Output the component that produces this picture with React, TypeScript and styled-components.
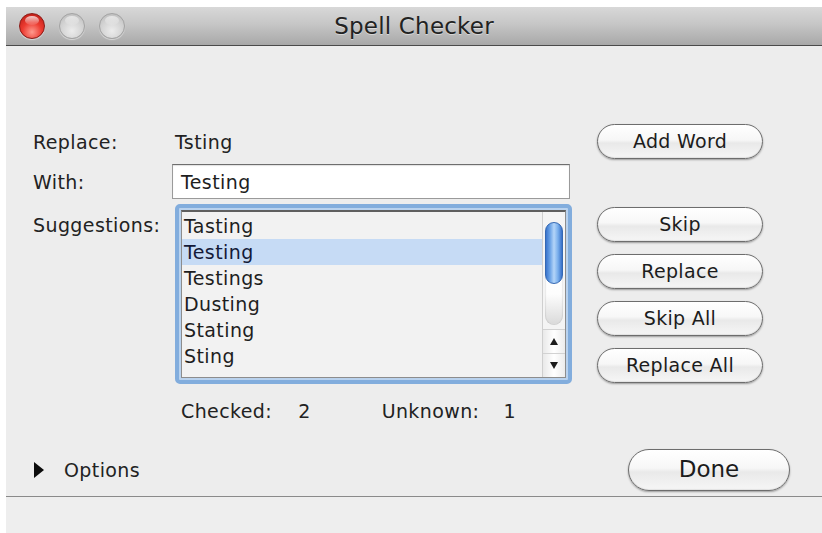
import React from "react";
import styled, { createGlobalStyle } from "styled-components";

const Global = createGlobalStyle`
  html, body { margin: 0; padding: 0; background: #ffffff; }
  body { font-family: "DejaVu Sans", "Liberation Sans", sans-serif; color: #1e1e1e; }
  * { box-sizing: border-box; }
`;

const Window = styled.div`
  margin: 7px 0 0 6px;
  width: 816px;
  height: 526px;
  display: flex;
  flex-direction: column;
  background: #ededed;
`;

const TitleBar = styled.div`
  height: 39px;
  flex: none;
  display: grid;
  grid-template-columns: 1fr auto 1fr;
  align-items: center;
  background: linear-gradient(#d8d8d8 0%, #c6c6c6 45%, #a8a8a8 100%);
  border-bottom: 1px solid #4a4a4a;
`;

const Lights = styled.div`
  display: flex;
  align-items: center;
  gap: 14px;
  padding-left: 13px;
`;

const Light = styled.span<{ $close?: boolean }>`
  position: relative;
  width: 26px;
  height: 26px;
  border-radius: 50%;
  border: 1px solid ${(p) => (p.$close ? "#8c1a16" : "#a3a3a3")};
  background: ${(p) =>
    p.$close
      ? "radial-gradient(circle at 50% 75%, #ff9a8e 0%, #ec3b31 45%, #b3160f 100%)"
      : "radial-gradient(circle at 50% 70%, #ececec 0%, #cfcfcf 60%, #b2b2b2 100%)"};
  box-shadow: 0 1px 1px rgba(255, 255, 255, 0.5);

  &::after {
    content: "";
    position: absolute;
    left: 5px;
    top: 2px;
    width: 14px;
    height: 9px;
    border-radius: 50%;
    background: linear-gradient(rgba(255, 255, 255, 0.9), rgba(255, 255, 255, 0.1));
    opacity: ${(p) => (p.$close ? 0.85 : 0.6)};
  }
`;

const Title = styled.div`
  font-size: 23px;
  color: #222;
  letter-spacing: 0.2px;
  text-shadow: 0 1px 0 rgba(255, 255, 255, 0.45);
`;

const Body = styled.div`
  flex: 1;
  display: flex;
  flex-direction: column;
  padding: 78px 32px 5px 27px;
  border-bottom: 1px solid #8a8a8a;
  font-size: 19px;
  letter-spacing: 0.4px;
`;

const Form = styled.div`
  display: grid;
  grid-template-columns: 114px 400px 166px;
  grid-template-rows: 35px 35px 180px auto;
  column-gap: 25px;
  row-gap: 5px;
  align-items: center;
`;

const Label = styled.div<{ $top?: boolean }>`
  line-height: 24px;
  color: #222;
  white-space: nowrap;
  align-self: ${(p) => (p.$top ? "start" : "center")};
  margin-top: ${(p) => (p.$top ? "9px" : "0")};
`;

const Value = styled.div`
  line-height: 24px;
  padding-left: 3px;
  color: #222;
`;

const Field = styled.div`
  width: 398px;
  height: 35px;
  display: flex;
  align-items: center;
  padding-left: 8px;
  background: #ffffff;
  border: 1px solid #9a9a9a;
  border-top-color: #6e6e6e;
  box-shadow: inset 0 1px 1px rgba(0, 0, 0, 0.12);
`;

const ListFrame = styled.div`
  width: 397px;
  height: 180px;
  margin-left: 3px;
  padding: 2px;
  border: 4px solid #82addd;
  border-radius: 5px;
  background: #b9d2ee;
`;

const ListBox = styled.div`
  height: 100%;
  display: flex;
  background: #f2f2f2;
  border: 1px solid #8d8d8d;
  border-top: 2px solid #5f5f5f;
`;

const Rows = styled.div`
  flex: 1;
  padding-top: 1px;
`;

const Row = styled.div<{ $selected?: boolean }>`
  height: 26px;
  line-height: 26px;
  padding-left: 2px;
  color: ${(p) => (p.$selected ? "#141a38" : "#1e1e1e")};
  background: ${(p) => (p.$selected ? "#c6dbf5" : "transparent")};
`;

const ScrollBar = styled.div`
  width: 23px;
  display: flex;
  flex-direction: column;
  border-left: 1px solid #cfcfcf;
  background: #f4f4f4;
`;

/* the empty part of the track reads as a pale capsule under the thumb */
const Track = styled.div`
  flex: 1;
  padding: 10px 2px 4px 2px;
  display: flex;
  flex-direction: column;
`;

const TrackCapsule = styled.div`
  flex: 1;
  display: flex;
  flex-direction: column;
  border-radius: 10px;
  background: linear-gradient(#ffffff 0%, #fdfdfd 70%, #d9d9d9 100%);
  box-shadow: inset 1px 0 1px rgba(0, 0, 0, 0.08), inset -1px 0 1px rgba(0, 0, 0, 0.08);
`;

const Thumb = styled.div`
  height: 62px;
  border-radius: 10px;
  border: 1px solid #3468b3;
  background: linear-gradient(90deg, #3a74cc 0%, #6aa2e6 25%, #b4d5f8 50%, #78aeec 75%, #3870c8 100%);
`;

const Arrow = styled.div<{ $down?: boolean }>`
  height: 24px;
  display: flex;
  align-items: center;
  justify-content: center;
  border-top: 1px solid #d2d2d2;
  background: linear-gradient(90deg, #e9e9e9, #ffffff 50%, #ececec);

  &::before {
    content: "";
    width: 0;
    height: 0;
    border-left: 4px solid transparent;
    border-right: 4px solid transparent;
    ${(p) => (p.$down ? "border-top: 7px solid #1c1c1c;" : "border-bottom: 7px solid #1c1c1c;")}
  }
`;

const Buttons = styled.div`
  align-self: start;
  display: flex;
  flex-direction: column;
  gap: 12px;
  padding-top: 3px;
`;

const PillButton = styled.button<{ $big?: boolean }>`
  width: ${(p) => (p.$big ? "162px" : "166px")};
  height: ${(p) => (p.$big ? "42px" : "35px")};
  padding: 0 0 2px;
  border: 1px solid #6d6d6d;
  border-radius: 22px;
  font-family: inherit;
  font-size: ${(p) => (p.$big ? "23px" : "19px")};
  letter-spacing: ${(p) => (p.$big ? "0" : "0.3px")};
  color: #1c1c1c;
  background: linear-gradient(#ffffff 0%, #f7f7f7 45%, #e9e9e9 55%, #f6f6f6 100%);
  box-shadow: 0 1px 2px rgba(0, 0, 0, 0.35), inset 0 -1px 1px rgba(0, 0, 0, 0.08);
`;

const Counts = styled.div`
  grid-column: 2;
  display: flex;
  align-items: center;
  margin-top: 10px;
  padding-left: 9px;
  line-height: 24px;
  color: #222;
`;

const CountValue = styled.span<{ $gap: number }>`
  margin-left: ${(p) => p.$gap}px;
`;

const CountLabel = styled.span<{ $gap?: number }>`
  margin-left: ${(p) => p.$gap ?? 0}px;
`;

const Footer = styled.div`
  margin-top: auto;
  display: flex;
  align-items: center;
  justify-content: space-between;
  padding-left: 1px;
`;

const Disclosure = styled.div`
  display: flex;
  align-items: center;
  gap: 20px;
  color: #222;
`;

const Triangle = styled.span`
  width: 0;
  height: 0;
  border-top: 8px solid transparent;
  border-bottom: 8px solid transparent;
  border-left: 10px solid #0c0c0c;
`;

const BottomStrip = styled.div`
  height: 36px;
  flex: none;
  background: #eeeeee;
`;

const suggestions = ["Tasting", "Testing", "Testings", "Dusting", "Stating", "Sting"];

export default function App() {
  return (
    <>
      <Global />
      <Window>
        <TitleBar>
          <Lights>
            <Light $close />
            <Light />
            <Light />
          </Lights>
          <Title>Spell Checker</Title>
          <div />
        </TitleBar>
        <Body>
          <Form>
            <Label>Replace:</Label>
            <Value>Tsting</Value>
            <PillButton>Add Word</PillButton>

            <Label>With:</Label>
            <Field>Testing</Field>
            <div />

            <Label $top>Suggestions:</Label>
            <ListFrame>
              <ListBox>
                <Rows>
                  {suggestions.map((word) => (
                    <Row key={word} $selected={word === "Testing"}>
                      {word}
                    </Row>
                  ))}
                </Rows>
                <ScrollBar>
                  <Track>
                    <TrackCapsule>
                      <Thumb />
                    </TrackCapsule>
                  </Track>
                  <Arrow />
                  <Arrow $down />
                </ScrollBar>
              </ListBox>
            </ListFrame>
            <Buttons>
              <PillButton>Skip</PillButton>
              <PillButton>Replace</PillButton>
              <PillButton>Skip All</PillButton>
              <PillButton>Replace All</PillButton>
            </Buttons>

            <Counts>
              <CountLabel>Checked:</CountLabel>
              <CountValue $gap={26}>2</CountValue>
              <CountLabel $gap={71}>Unknown:</CountLabel>
              <CountValue $gap={24}>1</CountValue>
            </Counts>
          </Form>
          <Footer>
            <Disclosure>
              <Triangle />
              <span>Options</span>
            </Disclosure>
            <PillButton $big>Done</PillButton>
          </Footer>
        </Body>
        <BottomStrip />
      </Window>
    </>
  );
}
